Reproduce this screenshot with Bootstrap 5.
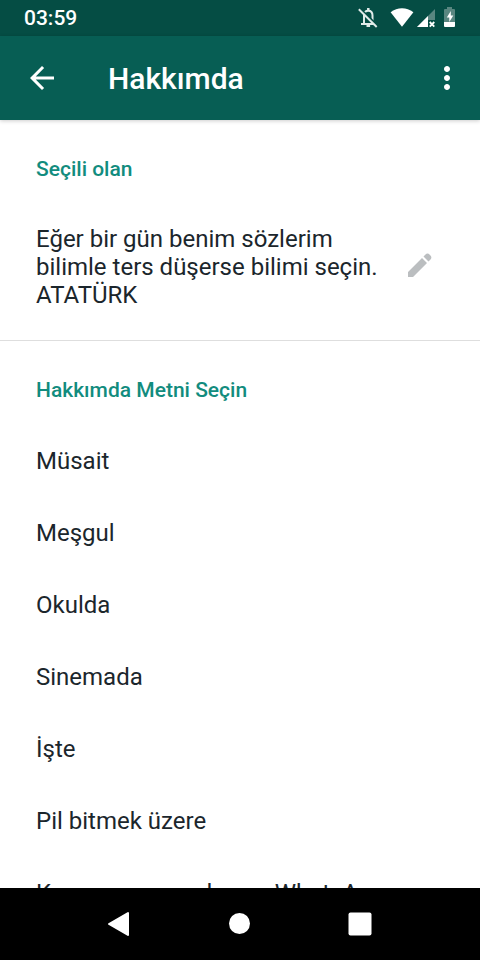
<!DOCTYPE html>
<html lang="tr">
<head>
<meta charset="utf-8">
<meta name="viewport" content="width=device-width, initial-scale=1">
<title>Hakkımda</title>
<link href="https://cdn.jsdelivr.net/npm/bootstrap@5.3.0/dist/css/bootstrap.min.css" rel="stylesheet">
<style>
  body { font-family: Roboto, "Noto Sans", sans-serif; font-size: 24px; line-height: 28px; color: #1b262c; background: #fff; }
  svg { display: block; }
  .status-bar { height: 36px; padding: 0 24px; background: #054d44; font-size: 21px; font-weight: 500; line-height: 38px; }
  .app-bar { height: 84px; padding: 0 12px; background: #075e54; box-shadow: 0 1px 4px rgba(0, 0, 0, .2); z-index: 1; }
  .app-bar h1 { font-size: 30px; font-weight: 500; line-height: 36px; padding: 2px 0 0 36px; }
  .tool { width: 60px; height: 60px; }
  .tool-narrow { width: 42px; height: 60px; }
  .content { scrollbar-width: none; }
  .content::-webkit-scrollbar { display: none; }
  .section-title { font-size: 21px; font-weight: 500; line-height: 26px; color: #128c7e; padding: 36px 36px 0; }
  .current { padding: 43px 36px 31px; border-bottom: 1px solid #dedede; }
  .edit { width: 48px; height: 48px; }
  .choices { padding-top: 22px; }
  .choice { height: 72px; padding: 0 36px; font-size: 24px; line-height: 28px; color: inherit; white-space: nowrap; }
  .system-nav { height: 72px; background: #000; }
  .system-nav .btn { width: 120px; height: 72px; }
</style>
</head>
<body>
<div class="d-flex flex-column vh-100 overflow-hidden">
  <div class="status-bar d-flex align-items-center justify-content-between text-white flex-shrink-0">
    <span>03:59</span>
    <svg width="100" height="36" viewBox="356 0 100 36" role="img" aria-label="Sessiz, Wi-Fi, sinyal yok, pil">
      <g fill="none" stroke="#e1ebe9" stroke-width="2">
        <path d="M364 23.5V15.5c0-3 1.700-4.800 4.300-4.800s4.200 1.800 4.200 4.800v8M361 24h15"/>
        <path d="M368.300 8v3" stroke-width="2.500"/>
        <path d="M366.500 26h3.600"/>
        <path d="M360.500 9L378 26" stroke="#054d44"/>
        <path d="M358.800 9.300L376.700 27"/>
      </g>
      <path fill="#fff" d="M390.600 12.200C397.500 6.900 406.500 6.900 413.400 12.200L402 26.700z"/>
      <path fill="#598680" d="M435 9v11h-7v7h-11z"/>
      <path fill="#fff" d="M428 16v11h-11z"/>
      <path fill="none" stroke="#fff" stroke-width="1.800" d="M429.700 22l4.600 4.600M434.300 22l-4.600 4.600"/>
      <path fill="#598680" d="M444 10q0-1 1-1h2V7h5v2h2q1 0 1 1v12h-11z"/>
      <path fill="#fff" d="M444 22h11v4q0 1-1 1h-9q-1 0-1-1z"/>
      <path fill="#fff" d="M450.800 11l-4 6.500h2.500v4.500l4-6.500h-2.500z"/>
    </svg>
  </div>

  <header class="app-bar d-flex align-items-center text-white flex-shrink-0 position-relative">
    <button type="button" class="btn tool border-0 p-0 d-flex align-items-center justify-content-center text-white" aria-label="Geri">
      <svg width="36" height="36" viewBox="0 0 24 24" fill="currentColor"><path d="M20 11H7.830l5.590-5.590L12 4l-8 8 8 8 1.410-1.410L7.830 13H20v-2z"/></svg>
    </button>
    <h1 class="m-0 flex-grow-1">Hakkımda</h1>
    <button type="button" class="btn tool-narrow border-0 p-0 d-flex align-items-center justify-content-center text-white" aria-label="Diğer seçenekler">
      <svg width="36" height="36" viewBox="0 0 24 24" fill="currentColor"><path d="M12 8c1.100 0 2-.9 2-2s-.9-2-2-2-2 .9-2 2 .9 2 2 2zm0 2c-1.100 0-2 .9-2 2s.9 2 2 2 2-.9 2-2-.9-2-2-2zm0 6c-1.100 0-2 .9-2 2s.9 2 2 2 2-.9 2-2-.9-2-2-2z"/></svg>
    </button>
  </header>

  <main class="content flex-grow-1 overflow-auto">
    <section>
      <h2 class="section-title m-0">Seçili olan</h2>
      <div class="current d-flex align-items-center justify-content-between">
        <p class="m-0">Eğer bir gün benim sözlerim bilimle ters düşerse bilimi seçin. ATATÜRK</p>
        <button type="button" class="btn edit border-0 p-0 d-flex align-items-center justify-content-center flex-shrink-0" aria-label="Düzenle">
          <svg width="32" height="32" viewBox="0 2 32 32" fill="#bbbec0"><path d="M4 23L18 9l5 5L9 28H4zM19.500 7.500l2-2q2-2 4.500.5t.5 4.500l-2 2z"/></svg>
        </button>
      </div>
    </section>
    <section>
      <h2 class="section-title m-0">Hakkımda Metni Seçin</h2>
      <div class="choices d-flex flex-column">
        <button type="button" class="choice btn border-0 rounded-0 text-start">Müsait</button>
        <button type="button" class="choice btn border-0 rounded-0 text-start">Meşgul</button>
        <button type="button" class="choice btn border-0 rounded-0 text-start">Okulda</button>
        <button type="button" class="choice btn border-0 rounded-0 text-start">Sinemada</button>
        <button type="button" class="choice btn border-0 rounded-0 text-start">İşte</button>
        <button type="button" class="choice btn border-0 rounded-0 text-start">Pil bitmek üzere</button>
        <button type="button" class="choice btn border-0 rounded-0 text-start">Konuşamam, yalnızca WhatsApp</button>
      </div>
    </section>
  </main>

  <nav class="system-nav d-flex align-items-center justify-content-center flex-shrink-0" aria-label="Sistem">
    <button type="button" class="btn border-0 p-0 d-flex align-items-center justify-content-center" aria-label="Geri">
      <svg width="26" height="26" viewBox="0 0 26 26"><path d="M2 13L21 2v22z" fill="#fff" stroke="#fff" stroke-width="2" stroke-linejoin="round"/></svg>
    </button>
    <button type="button" class="btn border-0 p-0 d-flex align-items-center justify-content-center" aria-label="Ana ekran">
      <svg width="26" height="26" viewBox="0 0 26 26"><circle cx="12.500" cy="12.500" r="10.500" fill="#fff"/></svg>
    </button>
    <button type="button" class="btn border-0 p-0 d-flex align-items-center justify-content-center" aria-label="Son uygulamalar">
      <svg width="26" height="26" viewBox="0 0 26 26"><rect x="1.500" y="1.500" width="23" height="23" rx="2" fill="#fff"/></svg>
    </button>
  </nav>
</div>
<script src="https://cdn.jsdelivr.net/npm/bootstrap@5.3.0/dist/js/bootstrap.bundle.min.js"></script>
</body>
</html>
